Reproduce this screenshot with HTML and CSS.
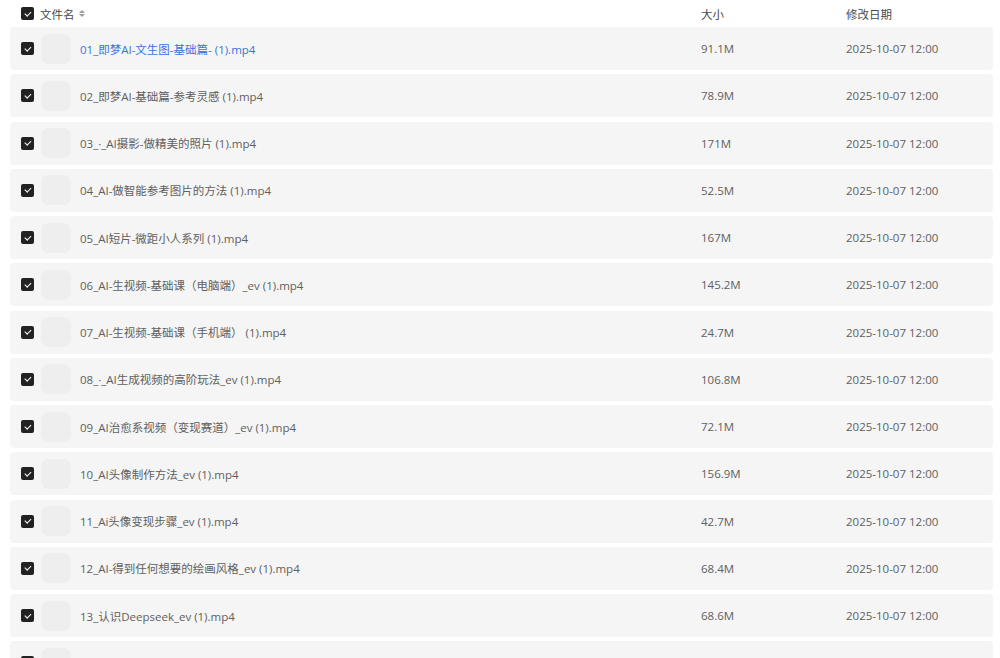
FILE: index.html
```html
<!DOCTYPE html>
<html lang="zh-CN">
<head>
    <meta charset="UTF-8">
    <title>文件列表</title>
    <link rel="stylesheet" href="styles.css">
</head>
<body>
    <div class="file-table">
        <div class="head">
            <div class="col-name">
                <span class="check"></span>
                <span>文件名</span>
                <span class="sort"></span>
            </div>
            <div class="col-size">大小</div>
            <div class="col-date">修改日期</div>
        </div>

        <div class="list">
            <div class="row">
                <div class="col-name"><span class="check"></span><span class="thumb"></span><span class="name link">01_即梦AI-文生图-基础篇- (1).mp4</span></div>
                <div class="col-size">91.1M</div>
                <div class="col-date">2025-10-07 12:00</div>
            </div>
            <div class="row">
                <div class="col-name"><span class="check"></span><span class="thumb"></span><span class="name">02_即梦AI-基础篇-参考灵感 (1).mp4</span></div>
                <div class="col-size">78.9M</div>
                <div class="col-date">2025-10-07 12:00</div>
            </div>
            <div class="row">
                <div class="col-name"><span class="check"></span><span class="thumb"></span><span class="name">03_·_AI摄影-做精美的照片 (1).mp4</span></div>
                <div class="col-size">171M</div>
                <div class="col-date">2025-10-07 12:00</div>
            </div>
            <div class="row">
                <div class="col-name"><span class="check"></span><span class="thumb"></span><span class="name">04_AI-做智能参考图片的方法 (1).mp4</span></div>
                <div class="col-size">52.5M</div>
                <div class="col-date">2025-10-07 12:00</div>
            </div>
            <div class="row">
                <div class="col-name"><span class="check"></span><span class="thumb"></span><span class="name">05_AI短片-微距小人系列 (1).mp4</span></div>
                <div class="col-size">167M</div>
                <div class="col-date">2025-10-07 12:00</div>
            </div>
            <div class="row">
                <div class="col-name"><span class="check"></span><span class="thumb"></span><span class="name">06_AI-生视频-基础课（电脑端）_ev (1).mp4</span></div>
                <div class="col-size">145.2M</div>
                <div class="col-date">2025-10-07 12:00</div>
            </div>
            <div class="row">
                <div class="col-name"><span class="check"></span><span class="thumb"></span><span class="name">07_AI-生视频-基础课（手机端） (1).mp4</span></div>
                <div class="col-size">24.7M</div>
                <div class="col-date">2025-10-07 12:00</div>
            </div>
            <div class="row">
                <div class="col-name"><span class="check"></span><span class="thumb"></span><span class="name">08_·_AI生成视频的高阶玩法_ev (1).mp4</span></div>
                <div class="col-size">106.8M</div>
                <div class="col-date">2025-10-07 12:00</div>
            </div>
            <div class="row">
                <div class="col-name"><span class="check"></span><span class="thumb"></span><span class="name">09_AI治愈系视频（变现赛道）_ev (1).mp4</span></div>
                <div class="col-size">72.1M</div>
                <div class="col-date">2025-10-07 12:00</div>
            </div>
            <div class="row">
                <div class="col-name"><span class="check"></span><span class="thumb"></span><span class="name">10_AI头像制作方法_ev (1).mp4</span></div>
                <div class="col-size">156.9M</div>
                <div class="col-date">2025-10-07 12:00</div>
            </div>
            <div class="row">
                <div class="col-name"><span class="check"></span><span class="thumb"></span><span class="name">11_Ai头像变现步骤_ev (1).mp4</span></div>
                <div class="col-size">42.7M</div>
                <div class="col-date">2025-10-07 12:00</div>
            </div>
            <div class="row">
                <div class="col-name"><span class="check"></span><span class="thumb"></span><span class="name">12_AI-得到任何想要的绘画风格_ev (1).mp4</span></div>
                <div class="col-size">68.4M</div>
                <div class="col-date">2025-10-07 12:00</div>
            </div>
            <div class="row">
                <div class="col-name"><span class="check"></span><span class="thumb"></span><span class="name">13_认识Deepseek_ev (1).mp4</span></div>
                <div class="col-size">68.6M</div>
                <div class="col-date">2025-10-07 12:00</div>
            </div>
            <!-- next row is only partly in view -->
            <div class="row">
                <div class="col-name"><span class="check"></span><span class="thumb"></span></div>
                <div class="col-size"></div>
                <div class="col-date"></div>
            </div>
        </div>
    </div>
</body>
</html>
```

FILE: styles.css
```css
/* Global */
body {
    margin: 0;
    padding: 0;
    background-color: #fff;
    font-family: "Open Sans", "Noto Sans CJK SC", sans-serif;
    font-size: 11.5px;
    color: #606060;
    overflow: hidden;
}

.file-table {
    padding: 0 7px 0 10px;
}

.head,
.row {
    display: grid;
    grid-template-columns: 680px 156px 1fr;
    align-items: center;
}

.head {
    height: 27px;
    color: #4a4a4a;
}

.head .col-name {
    gap: 6px;
}

.col-name {
    display: flex;
    align-items: center;
    padding-left: 11px;
}

.col-size {
    padding-left: 11px;
}

/* Rows */
.list {
    display: flex;
    flex-direction: column;
    gap: 4.25px;
}

.row {
    height: 43px;
    background-color: #f5f5f5;
    border-radius: 4px;
}

.check {
    width: 13px;
    height: 13px;
    border-radius: 2px;
    background-color: #222;
    position: relative;
    flex-shrink: 0;
}

.check::after {
    content: "";
    position: absolute;
    left: 4.5px;
    top: 2.5px;
    width: 2.5px;
    height: 5px;
    border: solid #fff;
    border-width: 0 1.5px 1.5px 0;
    transform: rotate(45deg);
}

.thumb {
    width: 30px;
    height: 30px;
    margin: 0 9px 0 7px;
    border-radius: 8px;
    background-color: #eeeeee;
    flex-shrink: 0;
}

.name {
    white-space: nowrap;
}

.link {
    color: #3a72e0;
}

/* sort arrows */
.sort {
    display: inline-flex;
    flex-direction: column;
    gap: 1px;
    margin-left: -2px;
}

.sort::before,
.sort::after {
    content: "";
    border-left: 3px solid transparent;
    border-right: 3px solid transparent;
}

.sort::before {
    border-bottom: 3px solid #999;
}

.sort::after {
    border-top: 3px solid #999;
}
```
